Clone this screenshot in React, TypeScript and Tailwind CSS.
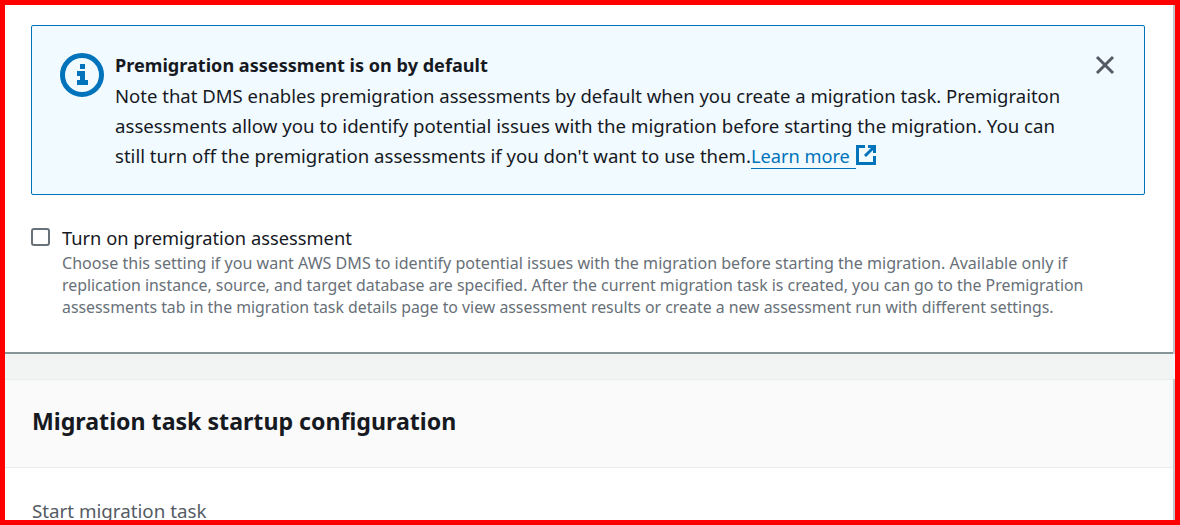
const font = { fontFamily: '"Noto Sans", sans-serif' };

const noteLines = [
  { text: "Note that DMS enables premigration assessments by default when you create a migration task. Premigraiton", cls: "mt-[4px] text-[18.53px]" },
  { text: "assessments allow you to identify potential issues with the migration before starting the migration. You can", cls: "text-[18.66px]" },
];

const hintLines = [
  { text: "Choose this setting if you want AWS DMS to identify potential issues with the migration before starting the migration. Available only if", cls: "text-[16.07px]" },
  { text: "replication instance, source, and target database are specified. After the current migration task is created, you can go to the Premigration", cls: "text-[15.87px]" },
  { text: "assessments tab in the migration task details page to view assessment results or create a new assessment run with different settings.", cls: "text-[15.85px]" },
];

function InfoIcon() {
  return (
    <svg width="44" height="44" viewBox="0 0 44 44" className="shrink-0">
      <circle cx="22" cy="22" r="19.5" fill="none" stroke="#0073bb" strokeWidth="5" />
      <rect x="20" y="11" width="5" height="5" fill="#0073bb" />
      <path d="M17 18h8v9h3v5H17v-5h3v-4h-3z" fill="#0073bb" />
    </svg>
  );
}

function ExternalIcon() {
  return (
    <svg width="20" height="20" viewBox="0 0 20 20" className="mt-[4px] shrink-0">
      <path d="M9 1.5H1.5v17h17V11" fill="none" stroke="#0073bb" strokeWidth="3" />
      <path d="M12 1.5h6.5V8" fill="none" stroke="#0073bb" strokeWidth="3" />
      <path d="M18 2l-9 9" fill="none" stroke="#0073bb" strokeWidth="3" />
    </svg>
  );
}

export default function App() {
  return (
    <div
      className="h-[525px] w-[1180px] overflow-hidden border-[5px] border-[#ff0000] bg-white text-[#16191f]"
      style={font}
    >
      <div className="h-full border-r-2 border-[#c4c6c6]">
        {/* Info alert */}
        <div className="px-[26px] pt-[20px]">
          <div className="flex h-[170px] w-[1114px] rounded-[2px] border border-[#0073bb] bg-[#f1faff] pl-[28px] pt-[27px]">
            <InfoIcon />
            <div className="ml-[11px] flex-1">
              <div className="text-[18.1px] leading-[24px] font-bold">Premigration assessment is on by default</div>
              {noteLines.map((line) => (
                <div key={line.text} className={`leading-[30px] whitespace-nowrap ${line.cls}`}>
                  {line.text}
                </div>
              ))}
              <div className="flex items-start leading-[30px] whitespace-nowrap">
                <span className="text-[18.6px]">
                  still turn off the premigration assessments if you don't want to use them.
                </span>
                <a className="mt-[2px] h-[26px] border-b border-[#0073bb] pr-[6px] text-[18.2px] leading-[27px] text-[#0073bb]">
                  Learn more
                </a>
                <ExternalIcon />
              </div>
            </div>
            <svg width="24" height="24" viewBox="0 0 24 24" className="mr-[27px] shrink-0">
              <path d="M4 4l16 16M20 4L4 20" fill="none" stroke="#545b64" strokeWidth="3" />
            </svg>
          </div>
        </div>

        {/* Checkbox */}
        <div className="flex pt-[30px] pl-[26px]">
          <div className="mt-[3px] h-[18px] w-[19px] shrink-0 rounded-[3px] border-2 border-[#687078]" />
          <div className="ml-[12px]">
            <div className="mb-[2px] text-[18.3px] leading-[25px]">Turn on premigration assessment</div>
            {hintLines.map((line) => (
              <div key={line.text} className={`leading-[22px] whitespace-nowrap text-[#687078] ${line.cls}`}>
                {line.text}
              </div>
            ))}
          </div>
        </div>

        {/* Gap between containers */}
        <div className="mt-[34px] h-[2px] bg-[#879596]" />
        <div className="-mr-[2px] h-[25px] bg-[#f2f3f3]" />

        {/* Startup configuration */}
        <div className="flex h-[89px] items-center border-y border-[#eaeded] bg-[#fafafa] pl-[27px]">
          <h2 className="mb-[5px] text-[23.15px] leading-[30px] font-bold">Migration task startup configuration</h2>
        </div>
        <div className="pt-[30px] pl-[27px] text-[18.75px] leading-[26px] text-[#545b64]">Start migration task</div>
      </div>
    </div>
  );
}
